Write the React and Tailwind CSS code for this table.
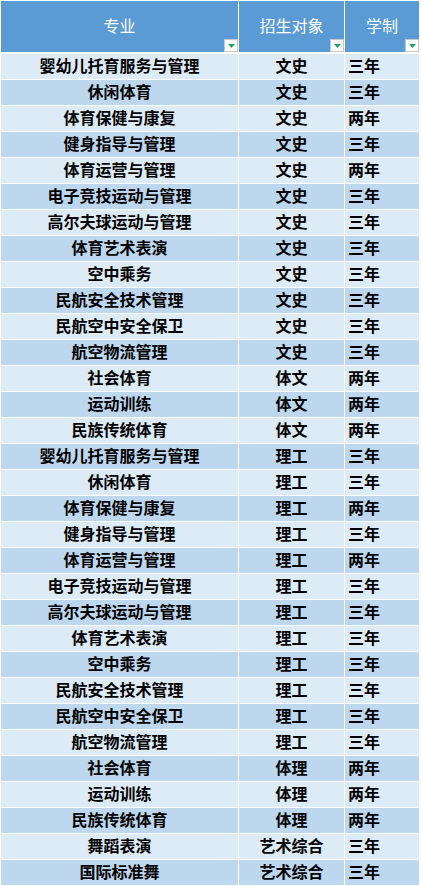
const rows = [
  ["婴幼儿托育服务与管理", "文史", "三年"],
  ["休闲体育", "文史", "三年"],
  ["体育保健与康复", "文史", "两年"],
  ["健身指导与管理", "文史", "三年"],
  ["体育运营与管理", "文史", "两年"],
  ["电子竞技运动与管理", "文史", "三年"],
  ["高尔夫球运动与管理", "文史", "三年"],
  ["体育艺术表演", "文史", "三年"],
  ["空中乘务", "文史", "三年"],
  ["民航安全技术管理", "文史", "三年"],
  ["民航空中安全保卫", "文史", "三年"],
  ["航空物流管理", "文史", "三年"],
  ["社会体育", "体文", "两年"],
  ["运动训练", "体文", "两年"],
  ["民族传统体育", "体文", "两年"],
  ["婴幼儿托育服务与管理", "理工", "三年"],
  ["休闲体育", "理工", "三年"],
  ["体育保健与康复", "理工", "两年"],
  ["健身指导与管理", "理工", "三年"],
  ["体育运营与管理", "理工", "两年"],
  ["电子竞技运动与管理", "理工", "三年"],
  ["高尔夫球运动与管理", "理工", "三年"],
  ["体育艺术表演", "理工", "三年"],
  ["空中乘务", "理工", "三年"],
  ["民航安全技术管理", "理工", "三年"],
  ["民航空中安全保卫", "理工", "三年"],
  ["航空物流管理", "理工", "三年"],
  ["社会体育", "体理", "两年"],
  ["运动训练", "体理", "两年"],
  ["民族传统体育", "体理", "两年"],
  ["舞蹈表演", "艺术综合", "三年"],
  ["国际标准舞", "艺术综合", "三年"],
];

function FilterButton() {
  return (
    <div className="absolute right-0 bottom-0 w-[14px] h-[13px] bg-white border border-[#c8c8c8] flex items-center justify-center">
      <svg width="7" height="4" viewBox="0 0 7 4">
        <polygon points="0,0 7,0 3.5,4" fill="#1fa463" />
      </svg>
    </div>
  );
}

function HeaderCell({ children }) {
  return (
    <div className="relative h-[51px] bg-[#5b9bd5] text-white flex items-center justify-center text-[16px] leading-none pb-[3px]">
      {children}
      <FilterButton />
    </div>
  );
}

export default function App() {
  return (
    <div
      className="w-[421px] h-[886px] bg-white pt-px pl-px overflow-hidden"
      style={{ fontFamily: '"Noto Sans CJK SC", "Noto Sans", sans-serif' }}
    >
      <div className="grid grid-cols-[237px_105px_74px] gap-x-px">
        <HeaderCell>专业</HeaderCell>
        <HeaderCell>招生对象</HeaderCell>
        <HeaderCell>学制</HeaderCell>
      </div>
      <div className="mt-[2px] flex flex-col gap-y-px">
        {rows.map((r, i) => {
          const bg = i % 2 === 0 ? "bg-[#ddebf7]" : "bg-[#bdd7ee]";
          return (
            <div key={i} className="grid grid-cols-[237px_105px_74px] gap-x-px h-[25px] text-[16px] font-bold text-black leading-none">
              <div className={`${bg} flex items-center justify-center pb-[3px]`}>{r[0]}</div>
              <div className={`${bg} flex items-center justify-center pb-[3px]`}>{r[1]}</div>
              <div className={`${bg} flex items-center pl-[3px] pb-[3px]`}>{r[2]}</div>
            </div>
          );
        })}
      </div>
    </div>
  );
}
